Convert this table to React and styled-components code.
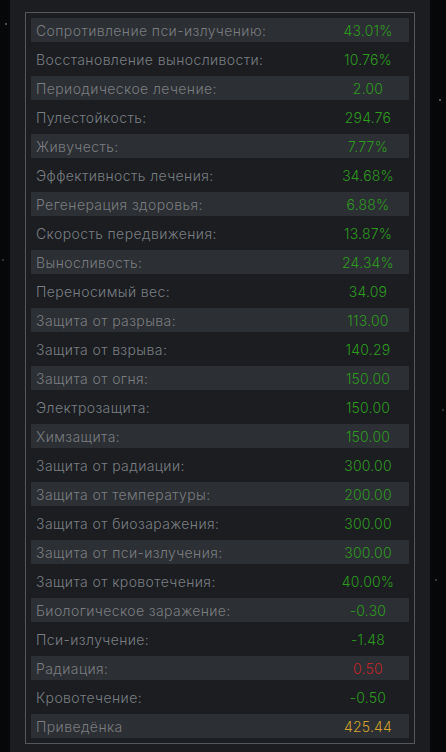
import styled, { createGlobalStyle } from "styled-components";

const GlobalStyle = createGlobalStyle`
  html, body {
    margin: 0;
    padding: 0;
    background: #060709;
  }
  body {
    font-family: "Inter", "Open Sans", sans-serif;
  }
`;

const Page = styled.div`
  min-height: 752px;
  background:
    radial-gradient(circle at 6px 24px, #5a5d60 0.6px, transparent 1.2px),
    radial-gradient(circle at 3px 260px, #3a3d40 0.6px, transparent 1.2px),
    radial-gradient(circle at 440px 100px, #55585b 0.7px, transparent 1.3px),
    radial-gradient(circle at 436px 580px, #3e4144 0.6px, transparent 1.2px),
    radial-gradient(circle at 443px 410px, #34373a 0.6px, transparent 1.2px),
    #060709;
  padding: 0 16px 0 10px;
`;

const Panel = styled.div`
  width: 420px;
  min-height: 752px;
  box-sizing: border-box;
  background: #1b1d21;
  padding: 12px 15px 9px;
`;

const StatBox = styled.div`
  border: 1px solid #55585b;
  padding: 5px;
  display: flex;
  flex-direction: column;
  gap: 5px;
`;

const Row = styled.div`
  display: flex;
  align-items: center;
  height: 24px;
  background: ${(p) => (p.$shaded ? "#2c2f33" : "transparent")};
  font-size: 14px;
  letter-spacing: 0.4px;
`;

const Label = styled.span`
  flex: 1;
  padding-left: 5px;
  color: #7a7d81;
  font-weight: 350;
  white-space: nowrap;
`;

const valueColors = {
  good: "#2e9b1f",
  bad: "#c0262a",
  gold: "#d3a22b",
};

const Value = styled.span`
  width: 82px;
  text-align: center;
  font-weight: 350;
  letter-spacing: 0.2px;
  color: ${(p) => valueColors[p.$tone]};
`;

const stats = [
  ["Сопротивление пси-излучению:", "43.01%"],
  ["Восстановление выносливости:", "10.76%"],
  ["Периодическое лечение:", "2.00"],
  ["Пулестойкость:", "294.76"],
  ["Живучесть:", "7.77%"],
  ["Эффективность лечения:", "34.68%"],
  ["Регенерация здоровья:", "6.88%"],
  ["Скорость передвижения:", "13.87%"],
  ["Выносливость:", "24.34%"],
  ["Переносимый вес:", "34.09"],
  ["Защита от разрыва:", "113.00"],
  ["Защита от взрыва:", "140.29"],
  ["Защита от огня:", "150.00"],
  ["Электрозащита:", "150.00"],
  ["Химзащита:", "150.00"],
  ["Защита от радиации:", "300.00"],
  ["Защита от температуры:", "200.00"],
  ["Защита от биозаражения:", "300.00"],
  ["Защита от пси-излучения:", "300.00"],
  ["Защита от кровотечения:", "40.00%"],
  ["Биологическое заражение:", "-0.30"],
  ["Пси-излучение:", "-1.48"],
  ["Радиация:", "0.50", "bad"],
  ["Кровотечение:", "-0.50"],
  ["Приведёнка", "425.44", "gold"],
];

const App = () => {
  return (
    <>
      <GlobalStyle />
      <Page>
        <Panel>
          <StatBox>
            {stats.map(([label, value, tone = "good"], i) => (
              <Row key={label} $shaded={i % 2 === 0}>
                <Label>{label}</Label>
                <Value $tone={tone}>{value}</Value>
              </Row>
            ))}
          </StatBox>
        </Panel>
      </Page>
    </>
  );
};

export default App;
